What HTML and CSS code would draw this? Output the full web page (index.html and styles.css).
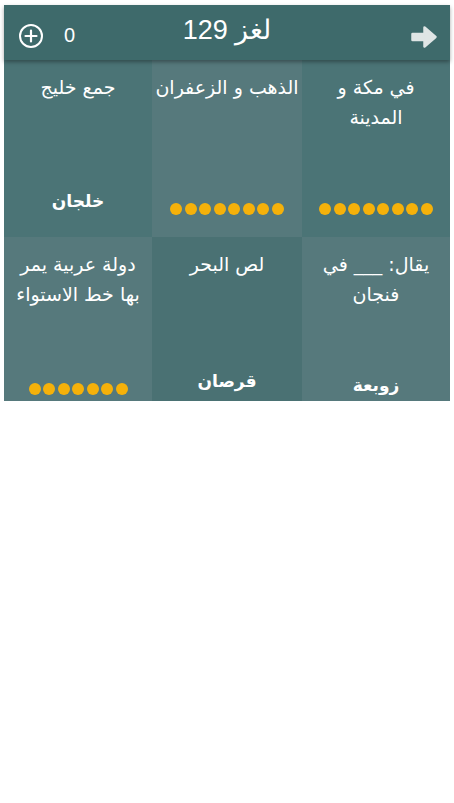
FILE: index.html
```html
<!DOCTYPE html>
<html lang="ar">

<head>
    <meta charset="UTF-8">
    <meta name="viewport" content="width=device-width, initial-scale=1.0">
    <title>لغز 129</title>
    <link rel="stylesheet" href="styles.css">
</head>

<body>
    <div class="screen">
        <div class="topbar">
            <div class="side coins">
                <svg class="plus" width="26" height="26" viewBox="0 0 26 26">
                    <circle cx="13" cy="13" r="11" fill="none" stroke="#fff" stroke-width="2"/>
                    <path d="M13 7.5v11M7.5 13h11" stroke="#fff" stroke-width="2.2" stroke-linecap="round"/>
                </svg>
                <span class="count">0</span>
            </div>
            <div class="title" dir="rtl">لغز 129</div>
            <div class="side back">
                <svg width="28" height="26" viewBox="0 0 28 26">
                    <path d="M2.5 10h12V3.5L25.5 13 14.5 22.5V16h-12z" fill="#dfe5e5" stroke="#dfe5e5" stroke-width="2.5" stroke-linejoin="round"/>
                </svg>
            </div>
        </div>

        <div class="board" dir="rtl">
            <div class="cell">
                <p class="question">في مكة و<br>المدينة</p>
                <div class="dots"><i></i><i></i><i></i><i></i><i></i><i></i><i></i><i></i></div>
            </div>
            <div class="cell">
                <p class="question">الذهب و الزعفران</p>
                <div class="dots"><i></i><i></i><i></i><i></i><i></i><i></i><i></i><i></i></div>
            </div>
            <div class="cell">
                <p class="question">جمع خليج</p>
                <p class="answer">خلجان</p>
            </div>
            <div class="cell">
                <p class="question">يقال: ___ في فنجان</p>
                <p class="answer low">زوبعة</p>
            </div>
            <div class="cell">
                <p class="question">لص البحر</p>
                <p class="answer">قرصان</p>
            </div>
            <div class="cell">
                <p class="question">دولة عربية يمر<br>بها خط الاستواء</p>
                <div class="dots"><i></i><i></i><i></i><i></i><i></i><i></i><i></i></div>
            </div>
        </div>
    </div>
</body>

</html>
```

FILE: styles.css
```css
body {
    margin: 0;
    padding: 0;
    background-color: #fff;
    font-family: "DejaVu Sans", sans-serif;
}

.screen {
    padding: 5px 4px 0;
}

.topbar {
    position: relative;
    z-index: 1;
    height: 55px;
    background-color: #3e6a6b;
    box-shadow: 0 2px 4px rgba(0, 0, 0, 0.35);
    display: flex;
    align-items: center;
    justify-content: space-between;
    color: #fff;
}

.side {
    width: 120px;
    display: flex;
    align-items: center;
}

.coins {
    padding: 6px 0 0 14px;
    box-sizing: border-box;
}

.count {
    font-family: "Liberation Sans", sans-serif;
    font-size: 20px;
    margin-left: 20px;
}

.title {
    font-family: "Liberation Sans", "DejaVu Sans", sans-serif;
    font-size: 27px;
    font-weight: 300;
    margin-top: -6px;
}

.back {
    justify-content: flex-end;
    padding: 8px 12px 0 0;
    box-sizing: border-box;
}

.board {
    display: grid;
    grid-template-columns: 148px 150px 148px;
    grid-template-rows: 177px 180px;
    height: 341px;
    overflow: hidden;
}

.cell {
    display: flex;
    flex-direction: column;
    align-items: center;
    justify-content: space-between;
    padding: 12px 2px 22px;
    box-sizing: border-box;
    text-align: center;
    color: #fff;
    background-color: #4b7476;
}

.board .cell:nth-child(2),
.board .cell:nth-child(4),
.board .cell:nth-child(6) {
    background-color: #56797c;
}

.board .cell:nth-child(5) {
    background-color: #4a7173;
}

.question {
    margin: 0;
    font-size: 19px;
    line-height: 30px;
}

.answer {
    margin: 0 0 4px;
    font-size: 17px;
    font-weight: bold;
}

.answer.low {
    margin-bottom: 0;
}

.dots {
    display: flex;
    gap: 2.5px;
    direction: ltr;
}

.dots i {
    width: 12px;
    height: 12px;
    border-radius: 50%;
    background-color: #f5b10a;
}
```
